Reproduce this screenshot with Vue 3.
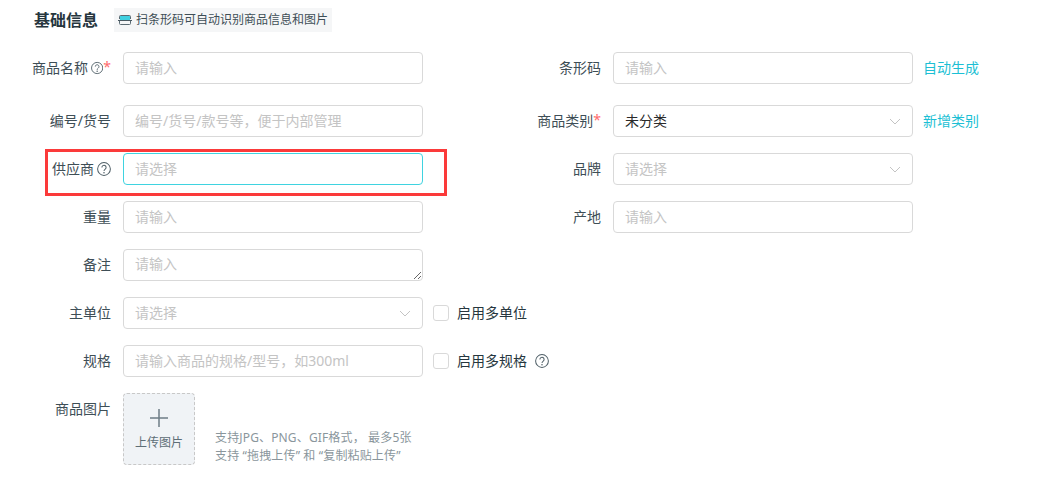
<script setup>
const help = 'M5.6 6.200a2.400 2.400 0 1 1 3.800 1.900c-.9.7-1.400 1.200-1.400 2.300'
</script>

<template>
  <div class="page">
    <header class="head">
      <h2 class="title">基础信息</h2>
      <div class="tip">
        <svg class="scan" width="14" height="12" viewBox="0 0 14 12">
          <rect x="2" y="2" width="10" height="4" fill="#3fd0e0"/>
          <path d="M1.500 5V2.500a1 1 0 0 1 1-1h9a1 1 0 0 1 1 1V5M1.500 7v2.500a1 1 0 0 0 1 1h9a1 1 0 0 0 1-1V7" fill="none" stroke="#5b6b73" stroke-width="1"/>
          <path d="M0 6.500h14" stroke="#4a5a62" stroke-width="1"/>
        </svg>
        <span>扫条形码可自动识别商品信息和图片</span>
      </div>
    </header>

    <div class="grid">
      <div class="cell first">
        <label class="lbl">商品名称
          <svg class="q gap" viewBox="0 0 16 16"><circle cx="8" cy="8" r="7.300"/><path :d="help"/><circle class="dot" cx="8" cy="12.200" r=".9"/></svg>
          <em class="req">*</em>
        </label>
        <input class="ctl" placeholder="请输入" />
      </div>
      <div class="cell first">
        <label class="lbl">条形码</label>
        <input class="ctl" placeholder="请输入" />
        <a class="link">自动生成</a>
      </div>

      <div class="cell">
        <label class="lbl">编号/货号</label>
        <input class="ctl" placeholder="编号/货号/款号等，便于内部管理" />
      </div>
      <div class="cell">
        <label class="lbl">商品类别<em class="req">*</em></label>
        <div class="ctl sel value">未分类
          <svg class="chev" viewBox="0 0 12 7"><path d="M1 1l5 5 5-5"/></svg>
        </div>
        <a class="link">新增类别</a>
      </div>

      <div class="cell">
        <label class="lbl">供应商
          <svg class="q gap" viewBox="0 0 16 16"><circle cx="8" cy="8" r="7.300"/><path :d="help"/><circle class="dot" cx="8" cy="12.200" r=".9"/></svg>
        </label>
        <input class="ctl focus" placeholder="请选择" />
      </div>
      <div class="cell">
        <label class="lbl">品牌</label>
        <div class="ctl sel">请选择
          <svg class="chev" viewBox="0 0 12 7"><path d="M1 1l5 5 5-5"/></svg>
        </div>
      </div>

      <div class="cell">
        <label class="lbl">重量</label>
        <input class="ctl" placeholder="请输入" />
      </div>
      <div class="cell">
        <label class="lbl">产地</label>
        <input class="ctl" placeholder="请输入" />
      </div>

      <div class="cell wide">
        <label class="lbl">备注</label>
        <textarea class="ctl area" placeholder="请输入"></textarea>
      </div>

      <div class="cell wide">
        <label class="lbl">主单位</label>
        <div class="ctl sel">请选择
          <svg class="chev" viewBox="0 0 12 7"><path d="M1 1l5 5 5-5"/></svg>
        </div>
        <span class="box"></span><span class="chk">启用多单位</span>
      </div>

      <div class="cell wide">
        <label class="lbl">规格</label>
        <input class="ctl" placeholder="请输入商品的规格/型号，如300ml" />
        <span class="box"></span><span class="chk">启用多规格</span>
        <svg class="q far" viewBox="0 0 16 16"><circle cx="8" cy="8" r="7.300"/><path :d="help"/><circle class="dot" cx="8" cy="12.200" r=".9"/></svg>
      </div>

      <div class="cell wide top">
        <label class="lbl imglbl">商品图片</label>
        <div class="upload">
          <svg class="plus" viewBox="0 0 18 18"><path d="M9 0v18M0 9h18"/></svg>
          <span>上传图片</span>
        </div>
        <p class="hint">支持JPG、PNG、GIF格式， 最多5张<br />支持 “拖拽上传” 和 “复制粘贴上传”</p>
      </div>
    </div>

    <div class="mark"></div>
  </div>
</template>

<style scoped>
.page {
  position: relative;
  width: 1042px;
  height: 485px;
  box-sizing: border-box;
  padding: 8px 0 0 32px;
  background: #fff;
  color: #3e4e56;
  font-family: "Noto Sans", "Noto Sans CJK SC", sans-serif;
  font-size: 14px;
  overflow: hidden;
}
.head {
  display: flex;
  align-items: center;
  height: 24px;
  margin-bottom: 20px;
}
.title {
  margin: 0 16px 0 2px;
  font-size: 16px;
  font-weight: 700;
  line-height: 22px;
  color: #26363e;
}
.tip {
  display: flex;
  align-items: center;
  height: 24px;
  padding: 0 4px;
  gap: 4px;
  background: #f5f6f7;
  font-size: 12px;
  color: #3e4e56;
}
.tip span { line-height: 22px; }
.grid {
  display: grid;
  grid-template-columns: 490px 490px;
  row-gap: 16px;
}
.cell {
  display: flex;
  align-items: center;
  height: 32px;
}
.cell.first { margin-bottom: 5px; }
.cell.wide { grid-column: 1 / 3; }
.cell.top { align-items: flex-start; height: 72px; }
.lbl {
  flex: none;
  display: flex;
  align-items: center;
  justify-content: flex-end;
  width: 79px;
  height: 30px;
  margin: 0 12px 2px 0;
  white-space: nowrap;
}
.req {
  font-style: normal;
  color: #ff6b6b;
  line-height: 14px;
}
.q {
  width: 14px;
  height: 14px;
  margin-top: 2px;
  fill: none;
  stroke: #4e5e66;
  stroke-width: 1.150;
}
.q .dot { fill: #4e5e66; stroke: none; }
.q.gap { margin-left: 3px; }
.q.far { margin-left: 8px; margin-top: 0; }
.ctl {
  position: relative;
  flex: none;
  display: flex;
  align-items: center;
  box-sizing: border-box;
  width: 300px;
  height: 32px;
  margin: 0;
  padding: 0 11px 2px 11px;
  border: 1px solid #d9d9d9;
  border-radius: 4px;
  outline: none;
  background: #fff;
  font: inherit;
  color: #c4c4c4;
}
.ctl::placeholder { color: #c4c4c4; opacity: 1; }
.ctl.value { color: #2a2a2a; }
.ctl.focus { border-color: #3fd3e0; }
.area {
  display: block;
  padding: 3px 11px;
  line-height: 22px;
  resize: vertical;
}
.sel { justify-content: space-between; }
.chev {
  width: 12px;
  height: 7px;
  margin-top: 2px;
  fill: none;
  stroke: #c4c4c4;
  stroke-width: 1;
}
.link {
  margin: 0 0 2px 10px;
  font-size: 14px;
  color: #1cbfd4;
  white-space: nowrap;
}
.box {
  flex: none;
  box-sizing: border-box;
  width: 16px;
  height: 16px;
  margin: 0 8px 0 10px;
  border: 1px solid #d9d9d9;
  border-radius: 3px;
}
.chk {
  margin-bottom: 2px;
  font-size: 14px;
  color: #26363e;
}
.upload {
  flex: none;
  display: flex;
  flex-direction: column;
  align-items: center;
  box-sizing: border-box;
  width: 72px;
  height: 72px;
  padding-top: 15px;
  border: 1px dashed #c8c8c8;
  border-radius: 4px;
  background: #f0f3f6;
  font-size: 12px;
  line-height: 18px;
  color: #5e6e76;
}
.plus {
  width: 18px;
  height: 18px;
  margin-bottom: 7px;
  fill: none;
  stroke: #6e7e86;
  stroke-width: 1.500;
}
.hint {
  align-self: flex-end;
  margin: 0 0 0 20px;
  font-size: 12px;
  letter-spacing: .15px;
  line-height: 18px;
  color: #8a969c;
}
.mark {
  position: absolute;
  left: 45px;
  top: 149px;
  width: 396px;
  height: 41px;
  border: 3px solid #fb3a3a;
}
</style>
